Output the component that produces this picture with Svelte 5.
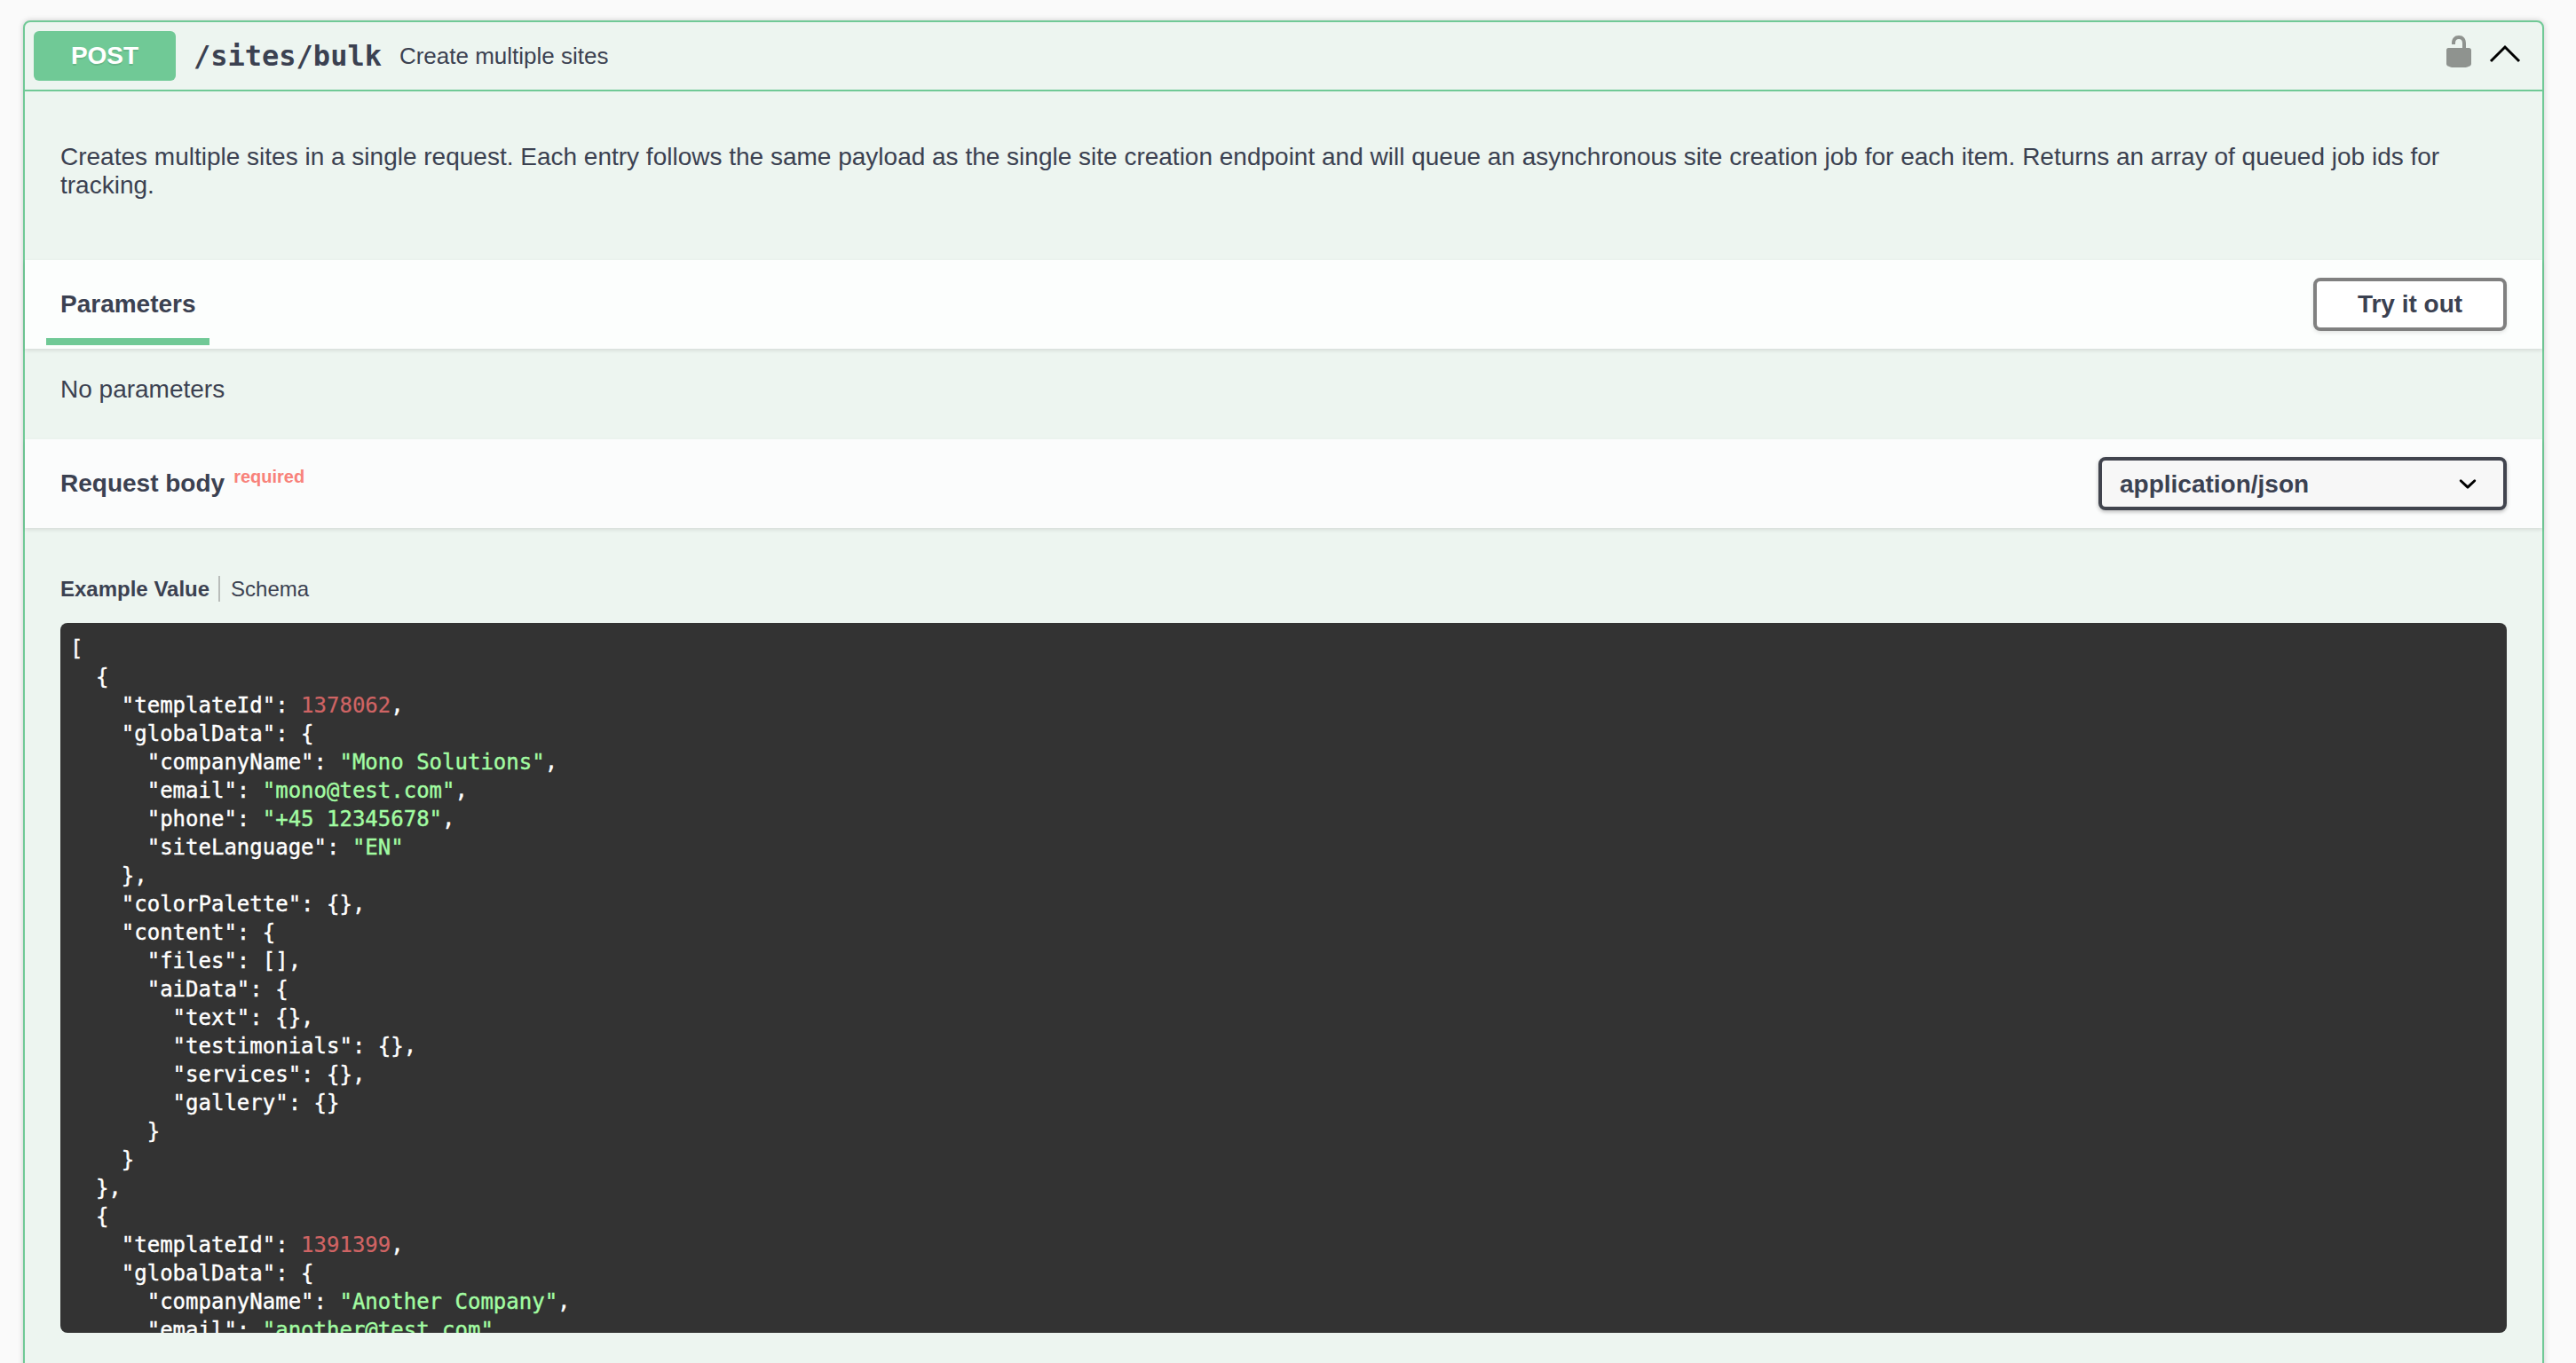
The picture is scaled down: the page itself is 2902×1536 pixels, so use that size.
<script>
  const example = `[
  {
    "templateId": 1378062,
    "globalData": {
      "companyName": "Mono Solutions",
      "email": "mono@test.com",
      "phone": "+45 12345678",
      "siteLanguage": "EN"
    },
    "colorPalette": {},
    "content": {
      "files": [],
      "aiData": {
        "text": {},
        "testimonials": {},
        "services": {},
        "gallery": {}
      }
    }
  },
  {
    "templateId": 1391399,
    "globalData": {
      "companyName": "Another Company",
      "email": "another@test.com",
      "phone": "+45 87654321",
      "siteLanguage": "EN"
    }
  }
]`;

  // split the json into plain / string / number pieces for colouring
  function tokenize(src) {
    const tokens = [];
    const re = /"[^"]*"(\s*:)?|\b\d+\b/g;
    let last = 0;
    let m;
    while ((m = re.exec(src))) {
      if (m.index > last) tokens.push({ text: src.slice(last, m.index), kind: 'plain' });
      let kind = 'num';
      if (m[0][0] === '"') kind = m[1] ? 'plain' : 'str';
      tokens.push({ text: m[0], kind });
      last = m.index + m[0].length;
    }
    tokens.push({ text: src.slice(last), kind: 'plain' });
    return tokens;
  }

  const tokens = tokenize(example);
</script>

<div class="opblock">
  <div class="summary">
    <span class="method">POST</span>
    <span class="path">/sites/bulk</span>
    <span class="summary-text">Create multiple sites</span>
    <div class="summary-icons">
      <svg class="lock" viewBox="0 0 20 20" width="40" height="40" aria-hidden="true">
        <path d="M15.8 8H14V5.6C14 2.703 12.665 1 10 1 7.334 1 6 2.703 6 5.6V6h2v-.801C8 3.754 8.797 3 10 3c1.203 0 2 .754 2 2.199V8H4c-.553 0-1 .646-1 1.199V17c0 .549.428 1.139.951 1.307l1.197.387C5.672 18.861 6.55 19 7.1 19h5.8c.549 0 1.428-.139 1.951-.307l1.196-.387c.524-.167.953-.757.953-1.306V9.199C17 8.646 16.352 8 15.8 8z" />
      </svg>
      <svg class="arrow" viewBox="0 0 40 40" width="40" height="40" aria-hidden="true">
        <path d="M4 29 L20 13 L36 29" />
      </svg>
    </div>
  </div>

  <div class="description">
    <p>Creates multiple sites in a single request. Each entry follows the same payload as the single site creation endpoint and will queue an asynchronous site creation job for each item. Returns an array of queued job ids for tracking.</p>
  </div>

  <div class="section-header">
    <div class="tab">Parameters</div>
    <button type="button" class="try-out">Try it out</button>
  </div>

  <div class="no-params">No parameters</div>

  <div class="section-header body-header">
    <div class="body-title">
      <span>Request body</span>
      <span class="required">required</span>
    </div>
    <div class="select-wrap">
      <select>
        <option>application/json</option>
      </select>
      <svg viewBox="0 0 20 20" width="40" height="40" aria-hidden="true">
        <path d="M13.418 7.859a.695.695 0 0 1 .978 0 .68.68 0 0 1 0 .969l-3.908 3.83a.697.697 0 0 1-.979 0l-3.908-3.83a.68.68 0 0 1 0-.969.695.695 0 0 1 .978 0L10 11l3.418-3.141z" />
      </svg>
    </div>
  </div>

  <div class="body-content">
    <div class="example-tabs">
      <span class="tab-active">Example Value</span>
      <span class="tab-divider"></span>
      <span>Schema</span>
    </div>
    <pre class="code">{#each tokens as t}<span class={t.kind}>{t.text}</span>{/each}</pre>
  </div>
</div>

<style>
  :global(body) {
    background: #fafafa;
    overflow: hidden;
    height: 100vh;
  }

  .opblock {
    margin: 23px 36px 0 26px;
    border: 2px solid #70c996;
    border-radius: 8px;
    background: #edf5f0;
    box-shadow: 0 0 6px rgba(0, 0, 0, 0.19);
    font-family: "Liberation Sans", Arial, sans-serif;
    color: #3b4151;
    padding-bottom: 100px;
  }

  .summary {
    display: flex;
    align-items: center;
    padding: 10px 22px 10px 10px;
    border-bottom: 2px solid #70c996;
  }

  .method {
    width: 160px;
    height: 56px;
    display: flex;
    align-items: center;
    justify-content: center;
    background: #70c996;
    border-radius: 6px;
    color: #fff;
    font-size: 28px;
    font-weight: 700;
    text-shadow: 0 2px 0 rgba(0, 0, 0, 0.1);
  }

  .path {
    padding: 0 20px;
    font-family: "DejaVu Sans Mono", monospace;
    font-size: 32px;
    font-weight: 700;
  }

  .summary-text {
    font-size: 26px;
  }

  .summary-icons {
    margin-left: auto;
    display: flex;
    gap: 12px;
  }

  .lock {
    fill: #8f938f;
    margin-top: -8px;
  }

  .arrow {
    margin-top: -6px;
  }

  .arrow path {
    fill: none;
    stroke: #000;
    stroke-width: 3;
  }

  .description {
    padding: 58px 40px 68px;
  }

  .description p {
    margin: 0;
    font-size: 28px;
    line-height: 32px;
  }

  .section-header {
    height: 100px;
    display: flex;
    align-items: center;
    justify-content: space-between;
    padding-right: 40px;
    background: #fcfefd;
    box-shadow: 0 2px 4px rgba(0, 0, 0, 0.1);
  }

  .tab {
    align-self: stretch;
    margin: 0 0 4px 24px;
    padding: 12px 15px 0 16px;
    border-bottom: 8px solid #70c996;
    display: flex;
    align-items: center;
    font-size: 28px;
    font-weight: 700;
  }

  .try-out {
    width: 218px;
    height: 60px;
    border: 4px solid #808080;
    border-radius: 8px;
    background: #fff;
    box-shadow: 0 2px 4px rgba(0, 0, 0, 0.1);
    color: #3b4151;
    font-family: inherit;
    font-size: 28px;
    font-weight: 700;
  }

  .no-params {
    padding: 30px 40px 40px;
    font-size: 28px;
    line-height: 32px;
  }

  .body-header {
    padding-left: 40px;
    background: #fbfcfc;
  }

  .body-title {
    display: flex;
    align-items: center;
    gap: 10px;
    font-size: 28px;
    font-weight: 700;
  }

  .required {
    margin-bottom: 16px;
    color: #f8827a;
    font-size: 20px;
  }

  .select-wrap {
    position: relative;
    width: 460px;
    height: 60px;
  }

  .select-wrap select {
    appearance: none;
    width: 100%;
    height: 100%;
    padding: 0 20px;
    border: 4px solid #41444e;
    border-radius: 8px;
    background: #f7f7f7;
    box-shadow: 0 2px 4px rgba(0, 0, 0, 0.25);
    color: #3b4151;
    font-family: inherit;
    font-size: 28px;
    font-weight: 700;
  }

  .select-wrap svg {
    position: absolute;
    top: 10px;
    right: 24px;
    fill: #000;
  }

  .body-content {
    padding: 54px 40px 0;
  }

  .example-tabs {
    display: flex;
    align-items: center;
    height: 29px;
    margin-bottom: 24px;
    font-size: 24px;
  }

  .tab-active {
    font-weight: 700;
  }

  .tab-divider {
    width: 2px;
    height: 29px;
    margin: 0 12px 0 10px;
    background: #b9bdba;
  }

  .code {
    height: 800px;
    margin: 0;
    padding: 13px 11px;
    box-sizing: border-box;
    overflow: hidden;
    border-radius: 8px;
    background: #333;
    color: #fff;
    font-family: "DejaVu Sans Mono", monospace;
    font-size: 24px;
    font-weight: 400;
    -webkit-text-stroke: 0.4px currentColor;
    line-height: 32px;
  }

  .str {
    color: #a2fca2;
  }

  .num {
    color: #d06464;
    -webkit-text-stroke: 0.2px currentColor;
  }
</style>
